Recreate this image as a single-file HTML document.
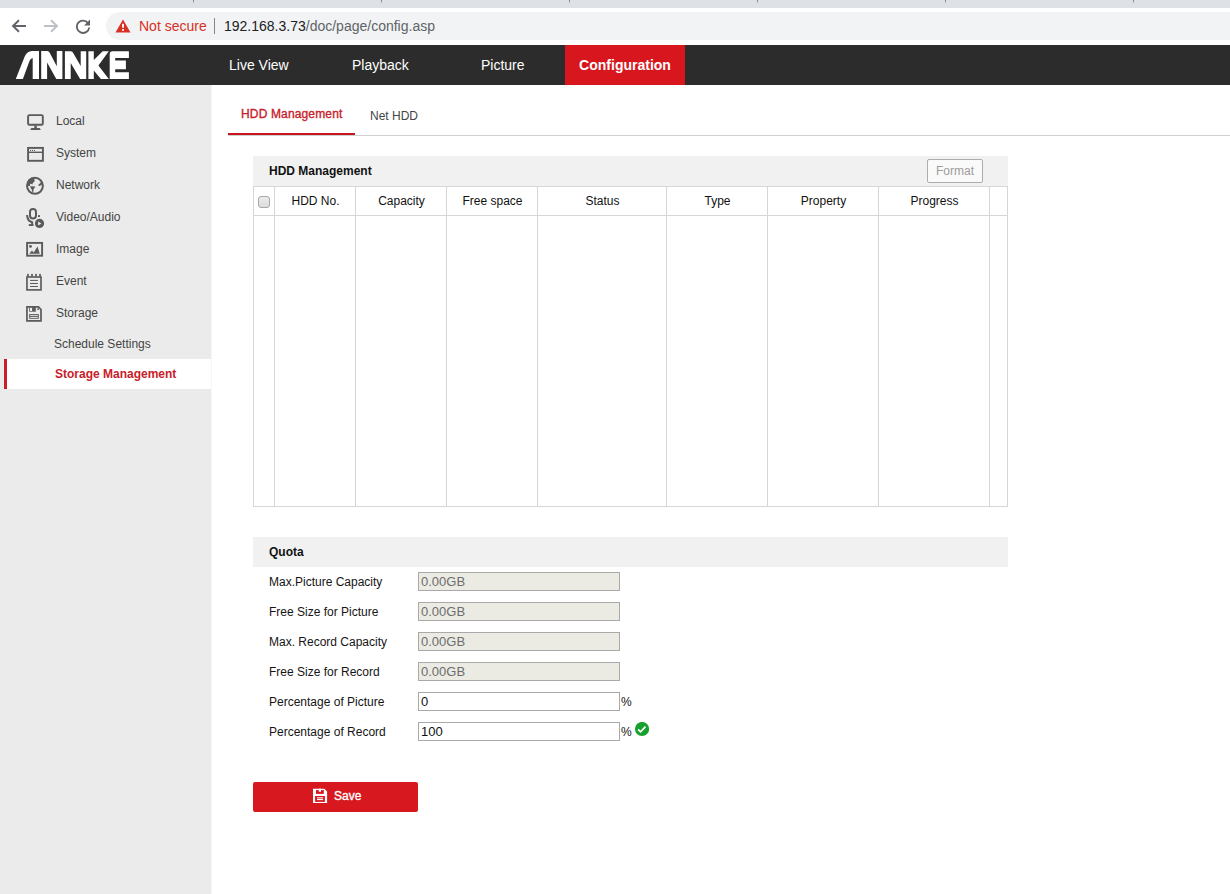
<!DOCTYPE html>
<html><head><meta charset="utf-8">
<style>
*{margin:0;padding:0;box-sizing:border-box}
html,body{width:1230px;height:894px;overflow:hidden;background:#fff;font-family:"Liberation Sans",sans-serif;position:relative}
.abs{position:absolute}
#tabstrip{left:0;top:0;width:1230px;height:8px;background:#dee1e6}
.tsep{top:0;width:1px;height:3px;background:linear-gradient(#6f747a,#c4c7cc)}
#toolbar{left:0;top:8px;width:1230px;height:37px;background:#fff}
#pill{left:106px;top:12px;width:1200px;height:28px;border-radius:14px;background:#f1f3f4}
.chrome-t{font-size:14px;white-space:nowrap;line-height:16px}
#nav{left:0;top:45px;width:1230px;height:40px;background:#2c2c2c}
.navi{top:45px;height:40px;line-height:40px;font-size:14px;color:#fff;white-space:nowrap}
#cfg{left:565px;width:120px;background:#d7161e;font-weight:bold;text-align:center}
#side{left:0;top:85px;width:211px;height:809px;background:#ebebeb}
.sitem{left:56px;font-size:12px;color:#444;white-space:nowrap;line-height:14px}
.ico{left:25px;width:20px;height:20px}
#active{left:4px;top:359px;width:207px;height:30px;background:#fff}
#activebar{left:4px;top:359px;width:3px;height:30px;background:#c8202a}
.lbl{font-size:12px;color:#151515;white-space:nowrap;line-height:14px}
.inp{left:418px;width:202px;height:19px;border:1px solid #a9a9a9;font-size:13px;line-height:17px;padding-left:2px;color:#6d6d6d;background:#ebebe4}
.inp.en{background:#fff;color:#111}
.vl{width:1px;background:#d6d6d6}
.hl{height:1px;background:#d6d6d6}
.th{top:186px;height:30px;line-height:30px;font-size:12px;color:#111;text-align:center;padding-left:1px}
</style></head><body>
<div class="abs" id="tabstrip"></div>
<div class="abs tsep" style="left:193px"></div>
<div class="abs tsep" style="left:381px"></div>
<div class="abs tsep" style="left:569px"></div>
<div class="abs tsep" style="left:757px"></div>
<div class="abs tsep" style="left:945px"></div>
<div class="abs tsep" style="left:1133px"></div>
<div class="abs" id="toolbar"></div>
<!-- back -->
<svg class="abs" style="left:10px;top:18px" width="18" height="16" viewBox="0 0 18 16">
<path d="M16 8H3.5M9 2.3L3 8l6 5.7" stroke="#5f6368" stroke-width="1.9" fill="none"/></svg>
<svg class="abs" style="left:42px;top:18px" width="18" height="16" viewBox="0 0 18 16">
<path d="M2 8h12.5M9 2.3L15 8l-6 5.7" stroke="#bdc1c6" stroke-width="1.9" fill="none"/></svg>
<svg class="abs" style="left:74px;top:18px" width="18" height="16" viewBox="0 0 18 16">
<path d="M14.3 5.5A6.2 6.2 0 1 0 15.2 9.5" stroke="#5f6368" stroke-width="1.9" fill="none"/>
<path d="M16 1.5V7.5H10Z" fill="#5f6368"/></svg>
<div class="abs" id="pill"></div>
<svg class="abs" style="left:115px;top:19px" width="16" height="14" viewBox="0 0 16 14">
<path d="M8 0.5L15.5 13.5H0.5Z" fill="#d93025"/>
<rect x="7.1" y="4.8" width="1.8" height="4" fill="#fff"/><rect x="7.1" y="10" width="1.8" height="1.8" fill="#fff"/></svg>
<div class="abs chrome-t" style="left:139px;top:17.5px;color:#d93025">Not secure</div>
<div class="abs" style="left:214px;top:18px;width:1px;height:16px;background:#80868b"></div>
<div class="abs chrome-t" style="left:224px;top:17.5px;color:#202124">192.168.3.73<span style="color:#5f6368">/doc/page/config.asp</span></div>

<div class="abs" id="nav"></div>
<svg class="abs" style="left:0;top:45px" width="140" height="40" viewBox="0 45 140 40">
<g fill="#fff">
<path d="M15.8 78.9L24.6 56.7Q27 51 32 50.9H39V78.9H32.7V58Q30.5 58.5 29.5 61.1L22.9 78.9Z"/>
<path d="M41.2 50.9H47.3Q48.8 51 49.6 52.6L56.8 66.2V50.9H62.4V78.9H56.3L47.1 62.6V78.9H41.2Z"/>
<path d="M64.9 51.2H70.9Q72.4 51.3 73.2 52.9L80.7 66.1V51.2H86.2V78.9H80.1L70.7 63.1V78.9H64.9Z"/>
<path d="M88.4 51.2H93.8V60L102.7 51.2H108.8L98.4 65.5L108.8 78.9H100.9L93.8 70.4V78.9H88.4Z"/>
<path d="M109.7 53.5Q110 51.2 112.5 51.2H128.9V57.9H115.2V60.4H125.9V69.2H115.2V72.2H128.9V78.9H109.7Z"/>
</g></svg>
<div class="abs navi" style="left:229px">Live View</div>
<div class="abs navi" style="left:352px">Playback</div>
<div class="abs navi" style="left:481px">Picture</div>
<div class="abs navi" id="cfg">Configuration</div>

<div class="abs" id="side"></div>
<div class="abs" style="left:211px;top:85px;width:1px;height:809px;background:#f6f6f6"></div>
<svg class="abs" style="left:0;top:100px" width="60" height="230" viewBox="0 100 60 230">
<g fill="none" stroke="#5a5a5a">
<rect x="28.1" y="115.1" width="14.7" height="9.6" rx="1.3" stroke-width="1.9"/>
<rect x="28.1" y="147.9" width="14.8" height="12.9" stroke-width="1.9"/>
<line x1="28" y1="152.3" x2="43" y2="152.3" stroke-width="1.4"/>
<circle cx="34.96" cy="185.8" r="7.95" stroke-width="2"/>
<rect x="30" y="209" width="6" height="9.6" rx="3" stroke-width="2"/>
<path d="M27.1 215Q27.3 221.3 32.3 222.2" stroke-width="2"/>
<rect x="27.1" y="242.9" width="15" height="12.8" stroke-width="1.9"/>
<rect x="26.95" y="277" width="14.05" height="12.9" stroke-width="1.65"/>
<path d="M30 280.4H37.9M30 283.5H37.9M30 286.5H37.9" stroke-width="1"/>
<path d="M26.95 306.85H38.5L41 309.5V320.95H26.95Z" stroke-width="1.7"/>
</g>
<g fill="#5a5a5a">
<path d="M30.1 130L31.4 128H39.6L40.9 130Z"/>
<rect x="34.3" y="125.5" width="2.5" height="2.8"/>
<circle cx="30.5" cy="150.4" r="0.55"/><circle cx="32.5" cy="150.4" r="0.55"/><circle cx="34.5" cy="150.4" r="0.55"/>
<path d="M33.7 177.2L34.7 180.4L34.3 181.7L33.1 182.8L32.6 183.6L32.5 184.4L31.4 183.9L30.3 183.8L29.9 185L30.2 186L27.2 186L27 183L28.5 179.5L31 177.8Z"/>
<path d="M30.1 186.2L35.3 186.5L34.8 187.6L33.5 189.4L33.3 192.2L32.4 192.2L31.7 189.4L30.4 187.6Z"/>
<path d="M40.7 182.5L39.3 184.1L38.2 185L38.4 185.6L39.5 185.9L41.1 185.3L42.9 184L42.4 181.5Z"/>
<rect x="31.2" y="221.5" width="1.9" height="4"/>
<rect x="28.8" y="224.1" width="4.7" height="1.9"/>
<rect x="38" y="215" width="2" height="2" rx="0.5"/>
<circle cx="39.5" cy="223.4" r="4.6"/>
<circle cx="30.5" cy="246.4" r="1.4"/>
<path d="M29.2 253.8L31.9 250.6L33.7 252.4L37.5 246.6L39.8 253.8Z"/>
<rect x="27.1" y="273.9" width="1.7" height="2.6"/><rect x="31.15" y="273.9" width="1.7" height="2.6"/><rect x="35.15" y="273.9" width="1.7" height="2.6"/><rect x="39.15" y="273.9" width="1.7" height="2.6"/>
<path d="M29.2 306H35.8V311.7H29.2Z"/>
<rect x="37.3" y="308.4" width="1.6" height="1.6"/>
<rect x="29.2" y="314.1" width="9.6" height="4.7"/>
</g>
<path d="M38.1 221.6V225.4L41.4 223.5Z" fill="#ebebeb"/>
<g fill="#ebebeb">
<rect x="30" y="307.8" width="2.1" height="3.2"/>
<rect x="30.1" y="315.2" width="7.8" height="0.9"/>
<rect x="30.1" y="317.1" width="7.8" height="0.9"/>
</g>
</svg>
<div class="abs" id="active"></div>
<div class="abs" id="activebar"></div>

<div class="abs sitem" style="top:114px">Local</div>
<div class="abs sitem" style="top:146px">System</div>
<div class="abs sitem" style="top:178px">Network</div>
<div class="abs sitem" style="top:210px">Video/Audio</div>
<div class="abs sitem" style="top:242px">Image</div>
<div class="abs sitem" style="top:274px">Event</div>
<div class="abs sitem" style="top:306px">Storage</div>
<div class="abs sitem" style="top:337px;left:54px">Schedule Settings</div>
<div class="abs sitem" style="top:367px;left:55px;color:#c8202a;font-weight:bold">Storage Management</div>

<!-- content tabs -->
<div class="abs" style="left:228px;top:135px;width:1002px;height:1px;background:#cfcfcf"></div>
<div class="abs" style="left:228px;top:133px;width:127px;height:2px;background:#c8161e"></div>
<div class="abs lbl" style="left:241px;top:107px;color:#c8202a;-webkit-text-stroke:0.35px #c8202a;letter-spacing:0.15px">HDD Management</div>
<div class="abs lbl" style="left:370px;top:109px;color:#444">Net HDD</div>

<!-- HDD table -->
<div class="abs" style="left:253px;top:156px;width:755px;height:30px;background:#f1f1f1"></div>
<div class="abs lbl" style="left:269px;top:164px;font-weight:bold;color:#111">HDD Management</div>
<div class="abs" style="left:927px;top:159px;width:56px;height:24px;border:1px solid #adadad;border-radius:2px;background:#fafafa;color:#9c9c9c;font-size:12px;line-height:22px;text-align:center">Format</div>

<div class="abs" style="left:253px;top:186px;width:755px;height:321px;background:#fff"></div>
<div class="abs vl" style="left:253px;top:186px;height:321px"></div>
<div class="abs vl" style="left:274px;top:186px;height:321px"></div>
<div class="abs vl" style="left:355px;top:186px;height:321px"></div>
<div class="abs vl" style="left:446px;top:186px;height:321px"></div>
<div class="abs vl" style="left:537px;top:186px;height:321px"></div>
<div class="abs vl" style="left:666px;top:186px;height:321px"></div>
<div class="abs vl" style="left:767px;top:186px;height:321px"></div>
<div class="abs vl" style="left:878px;top:186px;height:321px"></div>
<div class="abs vl" style="left:989px;top:186px;height:321px"></div>
<div class="abs vl" style="left:1007px;top:186px;height:321px"></div>
<div class="abs hl" style="left:253px;top:186px;width:755px"></div>
<div class="abs hl" style="left:253px;top:215px;width:755px"></div>
<div class="abs hl" style="left:253px;top:506px;width:755px"></div>
<div class="abs th" style="left:275px;width:80px">HDD No.</div>
<div class="abs th" style="left:356px;width:90px">Capacity</div>
<div class="abs th" style="left:447px;width:90px">Free space</div>
<div class="abs th" style="left:538px;width:128px">Status</div>
<div class="abs th" style="left:667px;width:100px">Type</div>
<div class="abs th" style="left:768px;width:110px">Property</div>
<div class="abs th" style="left:879px;width:110px">Progress</div>
<div class="abs" style="left:258px;top:196px;width:12px;height:12px;border:1px solid #a6a6a6;border-radius:3px;background:linear-gradient(#ececec,#dcdcdc)"></div>
<div class="abs" style="left:253px;top:537px;width:755px;height:30px;background:#f1f1f1"></div>
<div class="abs lbl" style="left:269px;top:545px;font-weight:bold;color:#111">Quota</div>
<div class="abs lbl" style="left:269px;top:575px">Max.Picture Capacity</div>
<div class="abs inp" style="top:572px">0.00GB</div>
<div class="abs lbl" style="left:269px;top:605px">Free Size for Picture</div>
<div class="abs inp" style="top:602px">0.00GB</div>
<div class="abs lbl" style="left:269px;top:635px">Max. Record Capacity</div>
<div class="abs inp" style="top:632px">0.00GB</div>
<div class="abs lbl" style="left:269px;top:665px">Free Size for Record</div>
<div class="abs inp" style="top:662px">0.00GB</div>
<div class="abs lbl" style="left:269px;top:695px">Percentage of Picture</div>
<div class="abs inp en" style="top:692px">0</div>
<div class="abs lbl" style="left:621px;top:695px">%</div>
<div class="abs lbl" style="left:269px;top:725px">Percentage of Record</div>
<div class="abs inp en" style="top:722px">100</div>
<div class="abs lbl" style="left:621px;top:725px">%</div>
<svg class="abs" style="left:634px;top:722px" width="16" height="16" viewBox="0 0 16 16"><circle cx="8.05" cy="7" r="7.1" fill="#18a02e"/><path d="M4.1 7.4L6.5 9.8L11.5 4.6" stroke="#fff" stroke-width="1.75" fill="none"/></svg>
<div class="abs" style="left:253px;top:782px;width:165px;height:30px;background:#d7181f;border-radius:2px"></div>
<svg class="abs" style="left:312px;top:788px" width="16" height="16" viewBox="0 0 16 16"><path d="M1 0.7H12.3L15.1 3.5V15.1H1Z" fill="#fff"/><rect x="4" y="2.1" width="7.8" height="3.8" fill="#d7181f"/><rect x="6.8" y="0.7" width="2.2" height="3.1" fill="#fff"/><rect x="3.1" y="8" width="9.8" height="5.9" fill="#d7181f"/><rect x="5" y="9.3" width="6.1" height="1.1" fill="#fff"/><rect x="5" y="11" width="6.1" height="1.1" fill="#fff"/></svg>
<div class="abs" style="left:334px;top:789px;color:#fff;font-size:12px;-webkit-text-stroke:0.35px #fff;line-height:14px">Save</div>
</body></html>
